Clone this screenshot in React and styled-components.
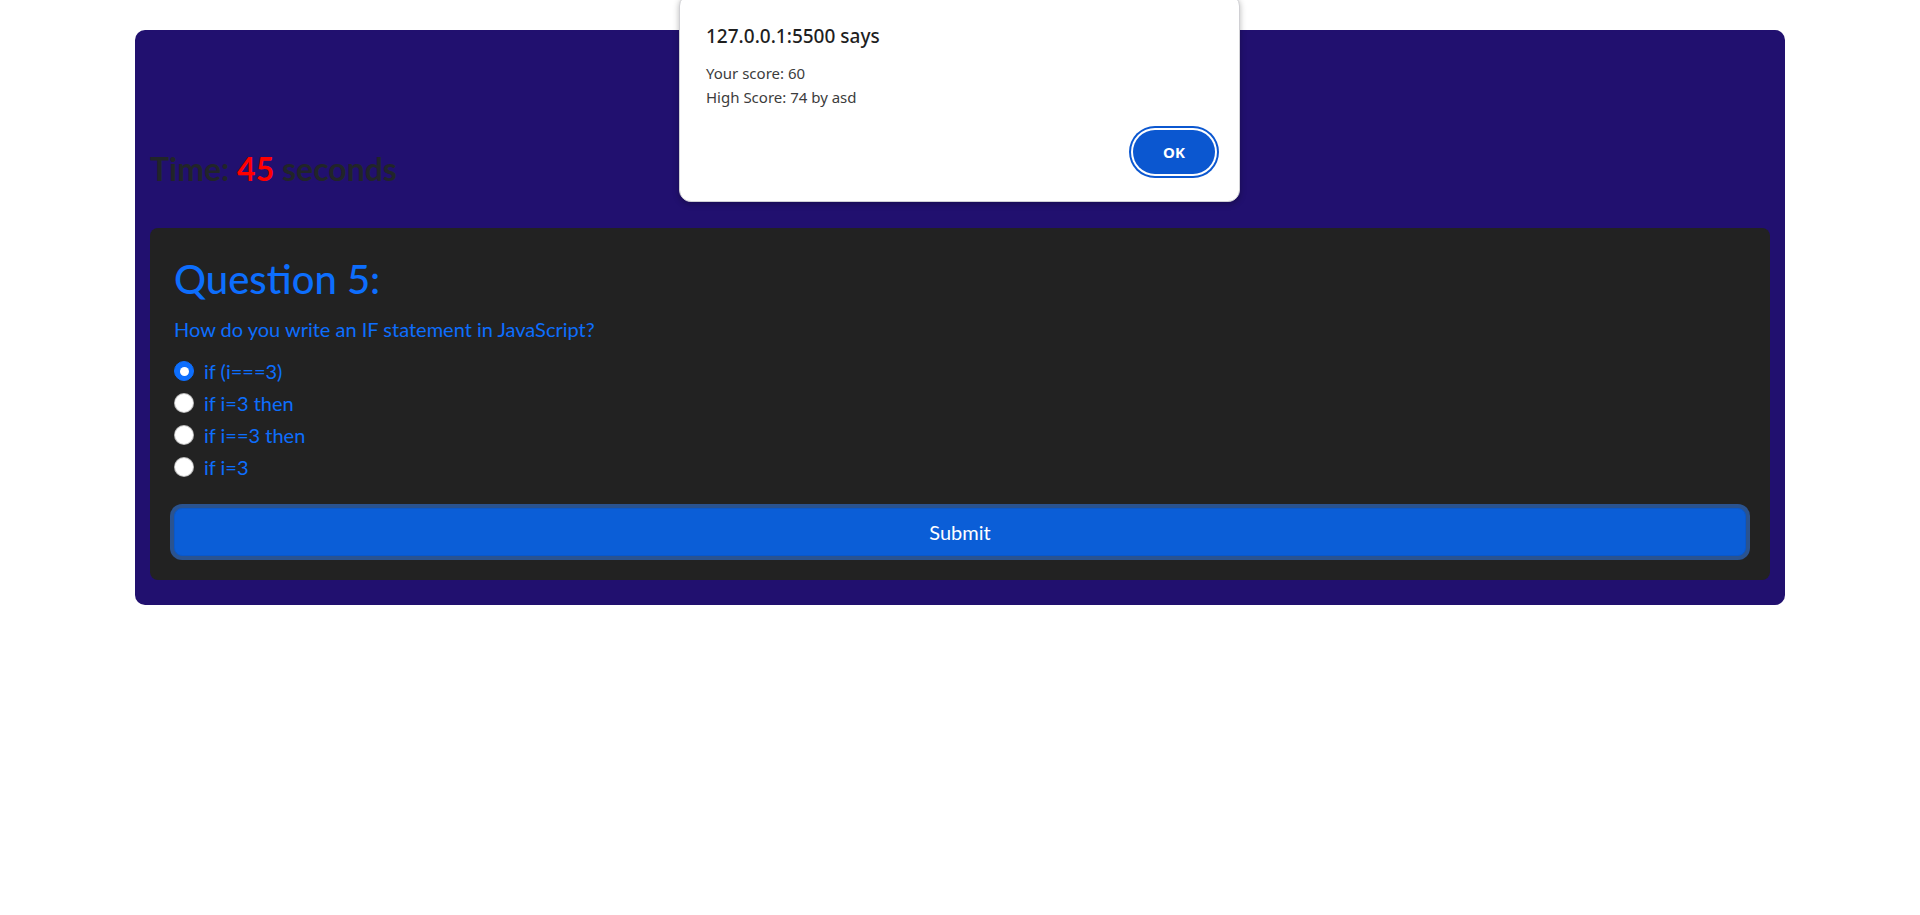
import React from 'react';
import styled, { createGlobalStyle } from 'styled-components';

const GlobalStyle = createGlobalStyle`
  html, body {
    margin: 0;
    padding: 0;
    background: #fff;
  }
  body {
    font-family: Lato, "Noto Sans", sans-serif;
    color: #212529;
  }
`;

const Page = styled.div`
  position: relative;
  min-height: 915px;
  padding-top: 30px;
  box-sizing: border-box;
`;

const QuizBox = styled.main`
  margin: 0 135px;
  padding: 120px 15px 25px;
  background: #21106f;
  border-radius: 10px;
`;

const Timer = styled.h2`
  margin: 0 0 40px;
  font-size: 32px;
  font-weight: 700;
  line-height: 1.2;
  color: #212529;
`;

const TimeLeft = styled.span`
  color: #ff0000;
`;

const Card = styled.section`
  background: #222;
  border-radius: 8px;
  padding: 24px;
`;

const QuestionTitle = styled.h1`
  margin: 3px 0 11px;
  font-size: 40px;
  font-weight: 500;
  line-height: 1.2;
  color: #0d6efd;
`;

const QuestionText = styled.p`
  margin: 0 0 12px;
  font-size: 20px;
  line-height: 1.5;
  color: #0d6efd;
`;

const Options = styled.div`
  display: flex;
  flex-direction: column;
  gap: 2px;
  margin-bottom: 26px;
`;

const Option = styled.label`
  display: flex;
  align-items: center;
  gap: 10px;
  height: 30px;
  font-size: 20px;
  line-height: 1.5;
  color: #0d6efd;
`;

const Radio = styled.span`
  width: 20px;
  height: 20px;
  box-sizing: border-box;
  border-radius: 50%;
  flex: none;
  background: ${p => (p.checked ? '#0d6efd' : '#fff')};
  border: 1px solid ${p => (p.checked ? '#0d6efd' : 'rgba(0,0,0,.25)')};
  display: flex;
  align-items: center;
  justify-content: center;

  &::after {
    content: '';
    display: ${p => (p.checked ? 'block' : 'none')};
    width: 9px;
    height: 9px;
    border-radius: 50%;
    background: #fff;
  }
`;

const SubmitButton = styled.button`
  display: block;
  width: 100%;
  height: 48px;
  font-family: inherit;
  font-size: 20px;
  line-height: 1.5;
  color: #fff;
  background: #0b5ed7;
  border: 1px solid #0a58ca;
  border-radius: 8px;
  box-shadow: 0 0 0 4px rgba(49, 132, 253, 0.5);
  cursor: pointer;
`;

const Alert = styled.div`
  position: absolute;
  top: -6px;
  left: 679px;
  width: 561px;
  height: 208px;
  box-sizing: border-box;
  padding: 28px 20px 0 26px;
  background: #fff;
  border: 1px solid #d0d0d4;
  border-radius: 12px;
  box-shadow: 0 2px 6px rgba(0, 0, 0, 0.28);
  font-family: "Noto Sans", sans-serif;
`;

const AlertTitle = styled.div`
  font-size: 19px;
  line-height: 26px;
  font-weight: 500;
  color: #1f1f1f;
  margin-bottom: 12px;
`;

const AlertLine = styled.div`
  font-size: 15px;
  line-height: 24px;
  color: #3c3c3c;
`;

const AlertActions = styled.div`
  display: flex;
  justify-content: flex-end;
  margin-top: 21px;
  padding-right: 4px;
`;

const OkButton = styled.button`
  width: 82px;
  height: 44px;
  border: none;
  border-radius: 22px;
  background: #0b57d0;
  color: #fff;
  font-family: inherit;
  font-size: 15px;
  font-weight: 700;
  box-shadow: 0 0 0 2px #fff, 0 0 0 4px #0b57d0;
`;

const options = ['if (i===3)', 'if i=3 then', 'if i==3 then', 'if i=3'];

export default function App() {
  return (
    <Page>
      <GlobalStyle />
      <QuizBox>
        <Timer>
          Time: <TimeLeft>45</TimeLeft> seconds
        </Timer>
        <Card>
          <QuestionTitle>Question 5:</QuestionTitle>
          <QuestionText>How do you write an IF statement in JavaScript?</QuestionText>
          <Options>
            {options.map((o, i) => (
              <Option key={o}>
                <Radio checked={i === 0} />
                {o}
              </Option>
            ))}
          </Options>
          <SubmitButton>Submit</SubmitButton>
        </Card>
      </QuizBox>
      <Alert>
        <AlertTitle>127.0.0.1:5500 says</AlertTitle>
        <AlertLine>Your score: 60</AlertLine>
        <AlertLine>High Score: 74 by asd</AlertLine>
        <AlertActions>
          <OkButton>OK</OkButton>
        </AlertActions>
      </Alert>
    </Page>
  );
}
